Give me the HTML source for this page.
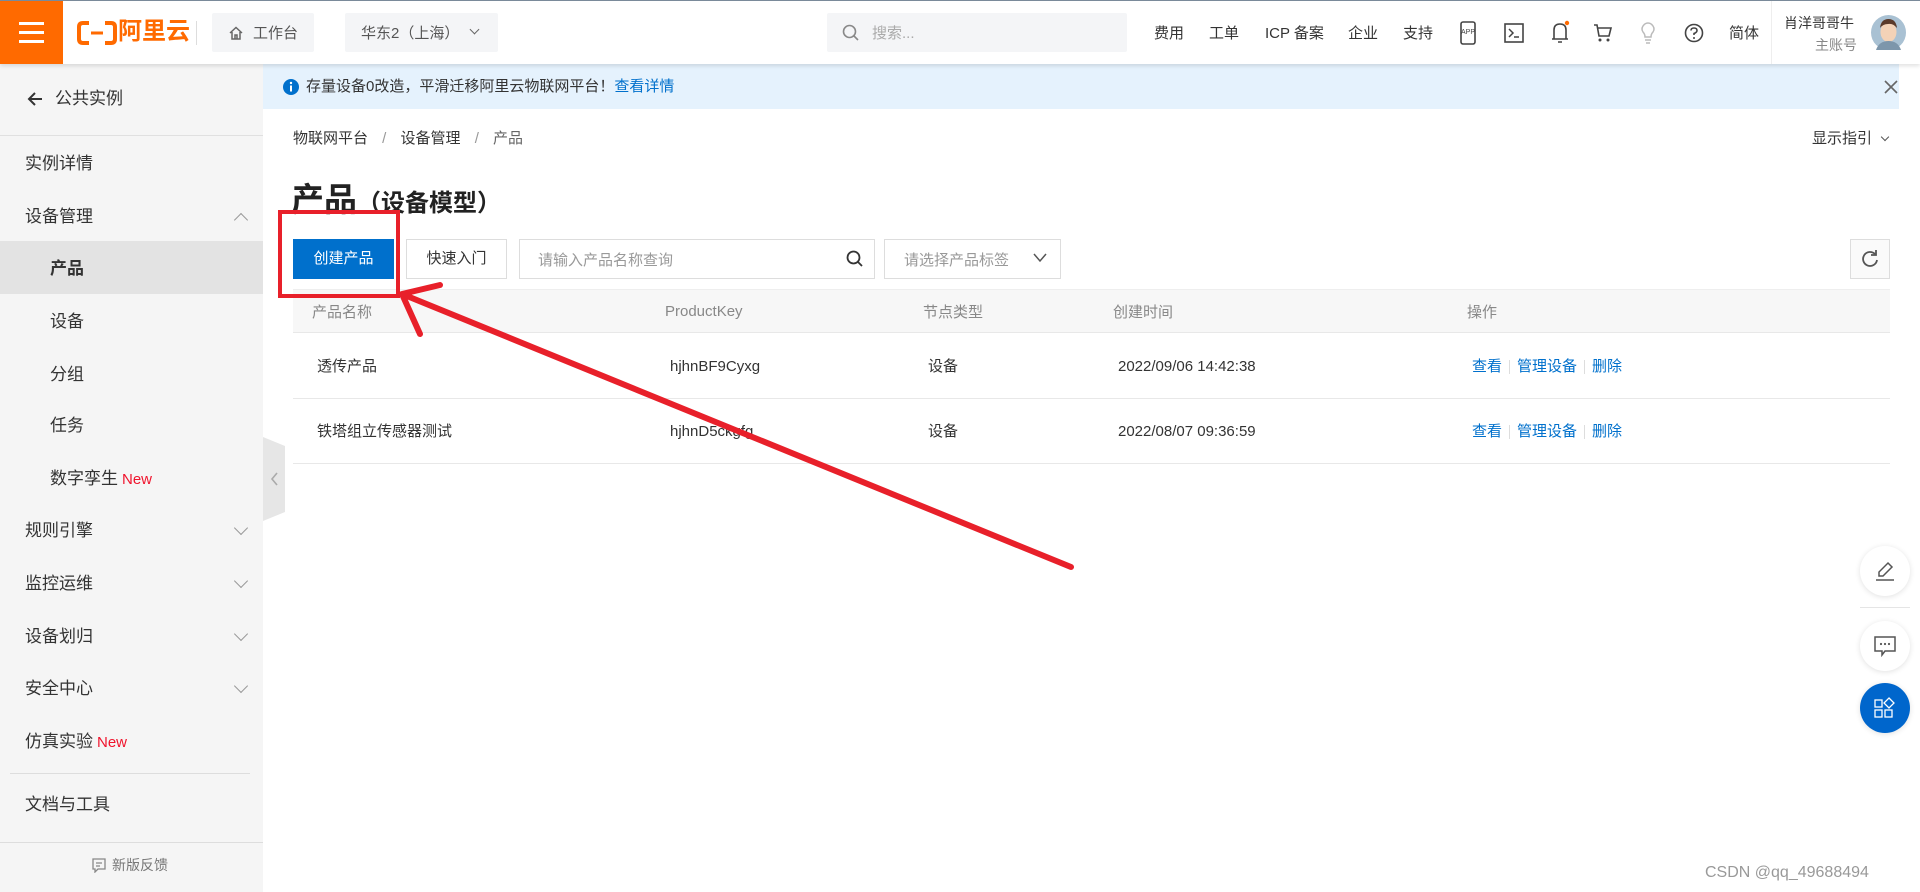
<!DOCTYPE html>
<html><head><meta charset="utf-8"><style>
*{margin:0;padding:0;box-sizing:border-box}
body{width:1920px;height:892px;overflow:hidden;background:#fff;font-family:"Liberation Sans","Noto Sans CJK SC",sans-serif;color:#333;position:relative}
.a{position:absolute;white-space:nowrap}
.hdr{position:absolute;left:0;top:0;width:1920px;height:64px;background:#fff;border-top:1px solid #7a8a9a;box-shadow:0 2px 4px rgba(0,0,0,.12);z-index:5}
.side{position:absolute;left:0;top:64px;width:263px;height:828px;background:#f5f5f5}
.si{position:absolute;left:25px;font-size:17px;color:#333;line-height:20px}
.sub{left:50px}
.chev{position:absolute;left:236px;width:10px;height:10px;border-right:1.6px solid #999;border-bottom:1.6px solid #999;transform:rotate(45deg)}
.new{color:#f0142d;font-size:15px;margin-left:4px}
.th{position:absolute;top:303px;font-size:15px;color:#888;line-height:20px}
.td{position:absolute;font-size:15px;color:#333;line-height:20px}
.td span,.th span{vertical-align:top}
.lk{color:#0070cc}
.sep{display:inline-block;width:1px;height:14px;background:#ddd;margin:3px 7px 0}
.fb{position:absolute;left:1860px;width:50px;height:50px;border-radius:50%;background:#fff;box-shadow:0 1px 6px rgba(0,0,0,.12)}
</style></head><body>
<div class="hdr">
 <div class="a" style="left:0;top:0;width:63px;height:63px;background:#ff6a00">
  <div class="a" style="left:19px;top:21px;width:25px;height:3px;background:#fff"></div>
  <div class="a" style="left:19px;top:30px;width:25px;height:3px;background:#fff"></div>
  <div class="a" style="left:19px;top:39px;width:25px;height:3px;background:#fff"></div>
 </div>
 <svg class="a" style="left:77px;top:20px" width="40" height="24" viewBox="0 0 40 24"><path d="M12 2H6Q2 2 2 6V18Q2 22 6 22H12M28 2H34Q38 2 38 6V18Q38 22 34 22H28" stroke="#ff6a00" stroke-width="4" fill="none"/><rect x="14" y="10.5" width="12" height="3" fill="#ff6a00"/></svg>
 <div class="a" style="left:118px;top:16px;font-size:24px;font-weight:bold;color:#ff6a00;line-height:30px">阿里云</div>
 <div class="a" style="left:196px;top:20px;width:1px;height:24px;background:#ddd"></div>
 <div class="a" style="left:212px;top:12px;width:102px;height:39px;background:#f4f5f7;border-radius:2px"></div>
 <svg class="a" style="left:228px;top:24px" width="16" height="16" viewBox="0 0 16 16"><path d="M2 8L8 2.5L14 8M4 7V14H12V7M7 14V10H9V14" stroke="#666" stroke-width="1.5" fill="none"/></svg>
 <div class="a" style="left:253px;top:21px;font-size:15px;color:#555">工作台</div>
 <div class="a" style="left:345px;top:12px;width:153px;height:39px;background:#f4f5f7;border-radius:2px"></div>
 <div class="a" style="left:361px;top:21px;font-size:15px;color:#555">华东2（上海）</div>
 <div class="a" style="left:471px;top:25px;width:7px;height:7px;border-right:1.5px solid #666;border-bottom:1.5px solid #666;transform:rotate(45deg)"></div>
 <div class="a" style="left:827px;top:12px;width:300px;height:39px;background:#f4f5f7;border-radius:2px"></div>
 <svg class="a" style="left:842px;top:23px" width="18" height="18" viewBox="0 0 18 18"><circle cx="7.5" cy="7.5" r="6" stroke="#888" stroke-width="1.6" fill="none"/><path d="M12 12L16 16" stroke="#888" stroke-width="1.6"/></svg>
 <div class="a" style="left:872px;top:21px;font-size:15px;color:#aaa">搜索...</div>
 <div class="a" style="left:1154px;top:21px;font-size:15px;color:#333">费用</div>
 <div class="a" style="left:1209px;top:21px;font-size:15px;color:#333">工单</div>
 <div class="a" style="left:1265px;top:21px;font-size:15px;color:#333">ICP 备案</div>
 <div class="a" style="left:1348px;top:21px;font-size:15px;color:#333">企业</div>
 <div class="a" style="left:1403px;top:21px;font-size:15px;color:#333">支持</div>
 <svg class="a" style="left:1459px;top:20px" width="18" height="24" viewBox="0 0 18 24"><rect x="2" y="1" width="14" height="22" rx="2" stroke="#444" stroke-width="1.6" fill="none"/><text x="9" y="13" font-size="7" text-anchor="middle" fill="#444" font-family="Liberation Sans">APP</text></svg>
 <svg class="a" style="left:1504px;top:22px" width="20" height="20" viewBox="0 0 20 20"><rect x="1" y="1" width="18" height="18" stroke="#444" stroke-width="1.6" fill="none"/><path d="M5 6L9 10L5 14M10 14H15" stroke="#444" stroke-width="1.5" fill="none"/></svg>
 <svg class="a" style="left:1550px;top:19px" width="20" height="26" viewBox="0 0 20 26"><path d="M4 19V10Q4 4 10 4Q16 4 16 10V19H4M2 19H18M8 22H12" stroke="#444" stroke-width="1.6" fill="none"/><circle cx="17" cy="3" r="2.2" fill="#ff6a00"/></svg>
 <svg class="a" style="left:1593px;top:22px" width="20" height="20" viewBox="0 0 20 20"><path d="M1 2H4L6 13H16L18 5H5" stroke="#444" stroke-width="1.6" fill="none"/><circle cx="7" cy="17" r="1.5" fill="#444"/><circle cx="15" cy="17" r="1.5" fill="#444"/></svg>
 <svg class="a" style="left:1639px;top:21px" width="18" height="22" viewBox="0 0 18 22"><path d="M6 15Q6 12 4 10Q2 7 4 4Q6 1 9 1Q12 1 14 4Q16 7 14 10Q12 12 12 15ZM6 18H12M7 21H11" stroke="#bbb" stroke-width="1.5" fill="none"/></svg>
 <svg class="a" style="left:1684px;top:22px" width="20" height="20" viewBox="0 0 20 20"><circle cx="10" cy="10" r="8.5" stroke="#444" stroke-width="1.6" fill="none"/><path d="M7 7.5Q7 5 10 5Q13 5 13 7.5Q13 9.5 10 10.5V12" stroke="#444" stroke-width="1.6" fill="none"/><circle cx="10" cy="15" r="1" fill="#444"/></svg>
 <div class="a" style="left:1729px;top:21px;font-size:15px;color:#333">简体</div>
 <div class="a" style="left:1771px;top:0;width:1px;height:63px;background:#eee"></div>
 <div class="a" style="left:1784px;top:12px;font-size:14px;color:#333">肖洋哥哥牛</div>
 <div class="a" style="left:1815px;top:34px;font-size:14px;color:#888">主账号</div>
 <svg class="a" style="left:1871px;top:14px" width="35" height="35" viewBox="0 0 35 35"><circle cx="17.5" cy="17.5" r="17.5" fill="#a9c1d3"/><ellipse cx="17.5" cy="17" rx="8" ry="10" fill="#f3d2b7"/><path d="M9 13Q10 4 17.5 4Q25 4 26 13Q22 8 17 9Q12 9 9 13Z" fill="#5a3a2a"/><path d="M5 35Q8 26 17.5 26Q27 26 30 35Z" fill="#7d96ab"/></svg>
</div>

<div class="side">
 <svg class="a" style="left:26px;top:26px" width="18" height="18" viewBox="0 0 18 18"><path d="M16 9H3M9 3L3 9L9 15" stroke="#333" stroke-width="2" fill="none"/></svg>
 <div class="si" style="left:55px;top:25px">公共实例</div>
 <div class="a" style="left:0;top:71px;width:263px;height:1px;background:#e0e0e0"></div>
 <div class="si" style="top:90px">实例详情</div>
 <div class="si" style="top:143px">设备管理</div>
 <div class="chev" style="top:151px;transform:rotate(225deg)"></div>
 <div class="a" style="left:0;top:177px;width:263px;height:53px;background:#e3e3e3"></div>
 <div class="si sub" style="top:195px;font-weight:bold">产品</div>
 <div class="si sub" style="top:248px">设备</div>
 <div class="si sub" style="top:301px">分组</div>
 <div class="si sub" style="top:352px">任务</div>
 <div class="si sub" style="top:405px">数字孪生<span class="new">New</span></div>
 <div class="si" style="top:457px">规则引擎</div><div class="chev" style="top:459px"></div>
 <div class="si" style="top:510px">监控运维</div><div class="chev" style="top:512px"></div>
 <div class="si" style="top:563px">设备划归</div><div class="chev" style="top:565px"></div>
 <div class="si" style="top:615px">安全中心</div><div class="chev" style="top:617px"></div>
 <div class="si" style="top:668px">仿真实验<span class="new">New</span></div>
 <div class="a" style="left:10px;top:709px;width:240px;height:1px;background:#ddd"></div>
 <div class="si" style="top:731px">文档与工具</div>
 <div class="a" style="left:0;top:778px;width:263px;height:1px;background:#ddd"></div>
 <svg class="a" style="left:91px;top:793px" width="16" height="16" viewBox="0 0 16 16"><path d="M2 2H14V12H7L4 15V12H2Z M5 6H11M5 9H9" stroke="#888" stroke-width="1.3" fill="none"/></svg>
 <div class="a" style="left:112px;top:791px;font-size:14px;color:#777">新版反馈</div>
</div>
<svg class="a" style="left:263px;top:437px" width="22" height="84" viewBox="0 0 22 84"><path d="M0 0L22 9V75L0 84Z" fill="#e6e6e6"/><path d="M14 36L9 42L14 48" stroke="#aaa" stroke-width="1.6" fill="none"/></svg>

<div class="a" style="left:263px;top:64px;width:1636px;height:45px;background:#e5f2fd"></div>
<svg class="a" style="left:282px;top:78px" width="18" height="18" viewBox="0 0 18 18"><circle cx="9" cy="9" r="8" fill="#0070cc"/><rect x="8" y="7.5" width="2" height="6" fill="#fff"/><circle cx="9" cy="5" r="1.2" fill="#fff"/></svg>
<div class="a" style="left:306px;top:77px;font-size:15px;color:#333;line-height:20px">存量设备0改造，平滑迁移阿里云物联网平台！<span class="lk">查看详情</span></div>
<svg class="a" style="left:1884px;top:80px" width="14" height="14" viewBox="0 0 14 14"><path d="M1 1L13 13M13 1L1 13" stroke="#666" stroke-width="1.6"/></svg>

<div class="a" style="left:293px;top:129px;font-size:15px;color:#333;line-height:20px">物联网平台 <span style="color:#999;margin:0 10px">/</span> 设备管理 <span style="color:#999;margin:0 10px">/</span> <span style="color:#666">产品</span></div>
<div class="a" style="left:1812px;top:129px;font-size:15px;color:#333;line-height:20px">显示指引</div>
<div class="a" style="left:1882px;top:134px;width:6px;height:6px;border-right:1.4px solid #555;border-bottom:1.4px solid #555;transform:rotate(45deg)"></div>

<div class="a" style="left:291px;top:173px;font-size:33px;font-weight:bold;color:#222">产品<span style="font-size:24px">（设备模型）</span></div>

<div class="a" style="left:293px;top:239px;width:101px;height:40px;background:#0070cc;color:#fff;font-size:15px;text-align:center;line-height:40px">创建产品</div>
<div class="a" style="left:406px;top:239px;width:101px;height:40px;border:1px solid #ddd;background:#fff;font-size:15px;text-align:center;line-height:38px">快速入门</div>
<div class="a" style="left:519px;top:239px;width:356px;height:40px;border:1px solid #ddd"></div>
<div class="a" style="left:538px;top:249px;font-size:15px;color:#999">请输入产品名称查询</div>
<svg class="a" style="left:846px;top:250px" width="18" height="18" viewBox="0 0 18 18"><circle cx="7.5" cy="7.5" r="6" stroke="#333" stroke-width="1.8" fill="none"/><path d="M12 12L16 16" stroke="#333" stroke-width="1.8"/></svg>
<div class="a" style="left:884px;top:239px;width:177px;height:40px;border:1px solid #ddd"></div>
<div class="a" style="left:904px;top:249px;font-size:15px;color:#999">请选择产品标签</div>
<svg class="a" style="left:1033px;top:253px" width="14" height="10" viewBox="0 0 14 10"><path d="M1 1L7 8L13 1" stroke="#555" stroke-width="1.5" fill="none"/></svg>
<div class="a" style="left:1850px;top:239px;width:40px;height:40px;border:1px solid #ddd;background:#fafafa"></div>
<svg class="a" style="left:1861px;top:249px" width="18" height="20" viewBox="0 0 18 20"><path d="M14 5A7 7 0 1 0 16 11" stroke="#555" stroke-width="1.8" fill="none"/><path d="M15 1V6H10" stroke="#555" stroke-width="1.8" fill="none"/></svg>

<div class="a" style="left:293px;top:289px;width:1597px;height:44px;background:#f7f7f7;border-top:1px solid #eee;border-bottom:1px solid #e8e8e8"></div>
<div class="th" style="left:312px">产品名称</div>
<div class="th" style="left:665px;top:302px">ProductKey</div>
<div class="th" style="left:923px">节点类型</div>
<div class="th" style="left:1113px">创建时间</div>
<div class="th" style="left:1467px">操作</div>
<div class="a" style="left:293px;top:398px;width:1597px;height:1px;background:#e8e8e8"></div>
<div class="a" style="left:293px;top:463px;width:1597px;height:1px;background:#e8e8e8"></div>
<div class="td" style="left:317px;top:357px">透传产品</div>
<div class="td" style="left:670px;top:357px">hjhnBF9Cyxg</div>
<div class="td" style="left:928px;top:357px">设备</div>
<div class="td" style="left:1118px;top:357px">2022/09/06 14:42:38</div>
<div class="td lk" style="left:1472px;top:357px">查看<span class="sep"></span>管理设备<span class="sep"></span>删除</div>
<div class="td" style="left:317px;top:422px">铁塔组立传感器测试</div>
<div class="td" style="left:670px;top:422px">hjhnD5ckgfg</div>
<div class="td" style="left:928px;top:422px">设备</div>
<div class="td" style="left:1118px;top:422px">2022/08/07 09:36:59</div>
<div class="td lk" style="left:1472px;top:422px">查看<span class="sep"></span>管理设备<span class="sep"></span>删除</div>

<svg class="a" style="left:0;top:0;z-index:3" width="1920" height="892" viewBox="0 0 1920 892">
 <rect x="280" y="212" width="118" height="84" stroke="#e8202a" stroke-width="4" fill="none"/>
 <path d="M1071 567L402 294M402 294L440 285M402 294L420 334" stroke="#e8202a" stroke-width="6" stroke-linecap="round" fill="none"/>
</svg>

<div class="fb" style="top:546px"></div>
<svg class="a" style="left:1874px;top:560px" width="22" height="22" viewBox="0 0 22 22"><path d="M5 16L5 12L14 3L18 7L9 16Z" stroke="#555" stroke-width="1.5" fill="none"/><path d="M2 20H20" stroke="#555" stroke-width="1.5"/></svg>
<div class="a" style="left:1860px;top:607px;width:50px;height:1px;background:#e5e5e5"></div>
<div class="fb" style="top:621px"></div>
<svg class="a" style="left:1873px;top:635px" width="24" height="22" viewBox="0 0 24 22"><path d="M2 2H22V16H12L9 20V16H2Z" stroke="#555" stroke-width="1.5" fill="none"/><circle cx="8" cy="9" r="1.1" fill="#555"/><circle cx="12" cy="9" r="1.1" fill="#555"/><circle cx="16" cy="9" r="1.1" fill="#555"/></svg>
<div class="fb" style="top:683px;background:#0066cc"></div>
<svg class="a" style="left:1874px;top:697px" width="22" height="22" viewBox="0 0 22 22"><rect x="1" y="3" width="7" height="7" stroke="#fff" stroke-width="1.3" fill="none"/><rect x="1" y="13" width="7" height="7" stroke="#fff" stroke-width="1.3" fill="none"/><rect x="11" y="13" width="7" height="7" stroke="#fff" stroke-width="1.3" fill="none"/><path d="M15 1L20 6L15 11L10 6Z" stroke="#fff" stroke-width="1.3" fill="none"/></svg>

<div class="a" style="left:1705px;top:864px;font-size:16px;color:#999">CSDN @qq_49688494</div>
</body></html>
